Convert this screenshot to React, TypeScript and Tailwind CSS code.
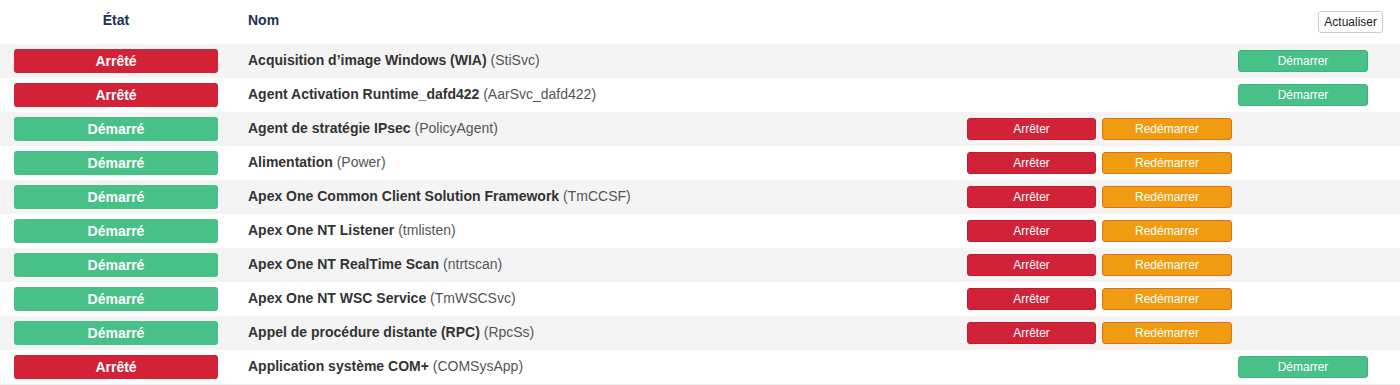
import React from 'react';

interface IService {
  label: string;
  name: string;
  running: boolean;
}

const services: IService[] = [
  { label: 'Acquisition d’image Windows (WIA)', name: 'StiSvc', running: false },
  { label: 'Agent Activation Runtime_dafd422', name: 'AarSvc_dafd422', running: false },
  { label: 'Agent de stratégie IPsec', name: 'PolicyAgent', running: true },
  { label: 'Alimentation', name: 'Power', running: true },
  { label: 'Apex One Common Client Solution Framework', name: 'TmCCSF', running: true },
  { label: 'Apex One NT Listener', name: 'tmlisten', running: true },
  { label: 'Apex One NT RealTime Scan', name: 'ntrtscan', running: true },
  { label: 'Apex One NT WSC Service', name: 'TmWSCSvc', running: true },
  { label: 'Appel de procédure distante (RPC)', name: 'RpcSs', running: true },
  { label: 'Application système COM+', name: 'COMSysApp', running: false },
];

const btn = 'h-[22px] rounded-[3px] text-[12px] text-white leading-none flex items-center justify-center';

const ServiceRow: React.FC<{ service: IService; index: number }> = ({ service, index }) => (
  <div className={`flex items-center h-[34px] ${index % 2 === 0 ? 'bg-[#f4f4f4]' : 'bg-white'}`}>
    <div className="w-[232px] px-[14px] shrink-0">
      <div
        className={`h-[24px] rounded-[3px] flex items-center justify-center text-white font-bold text-[14px] ${
          service.running ? 'bg-[#47c188]' : 'bg-[#d12238]'
        }`}
      >
        {service.running ? 'Démarré' : 'Arrêté'}
      </div>
    </div>
    <div className="flex-1 pl-[16px] text-[14px] text-[#333] pb-[1px]">
      <span className="font-bold">{service.label}</span>{' '}
      <span className="text-[#555]">({service.name})</span>
    </div>
    <div className="flex gap-[6px] pr-[32px]">
      {service.running ? (
        <>
          <button className={`${btn} w-[129px] bg-[#d12238] border border-[#c01c31]`}>Arrêter</button>
          <button className={`${btn} w-[130px] bg-[#ef9c10] border border-[#e0701a]`}>Redémarrer</button>
          <div className="w-[130px]" />
        </>
      ) : (
        <button className={`${btn} w-[130px] bg-[#47c188] border border-[#3db37c]`}>Démarrer</button>
      )}
    </div>
  </div>
);

const App: React.FC = () => (
  <div className="w-[1400px] bg-white font-['Liberation_Sans',Arial,sans-serif]">
    <div className="flex items-center h-[44px]">
      <div className="w-[232px] text-center font-bold text-[14px] text-[#1c3353] pb-[4px]">État</div>
      <div className="flex-1 pl-[16px] font-bold text-[14px] text-[#1c3353] pb-[4px]">Nom</div>
      <button className="h-[22px] px-[5px] mr-[17px] border border-[#ccc] rounded-[3px] bg-white text-[12px] text-[#222] leading-none">
        Actualiser
      </button>
    </div>
    {services.map((s, i) => (
      <ServiceRow key={s.name} service={s} index={i} />
    ))}
    <div className="h-px bg-[#eee]" />
  </div>
);

export default App;
